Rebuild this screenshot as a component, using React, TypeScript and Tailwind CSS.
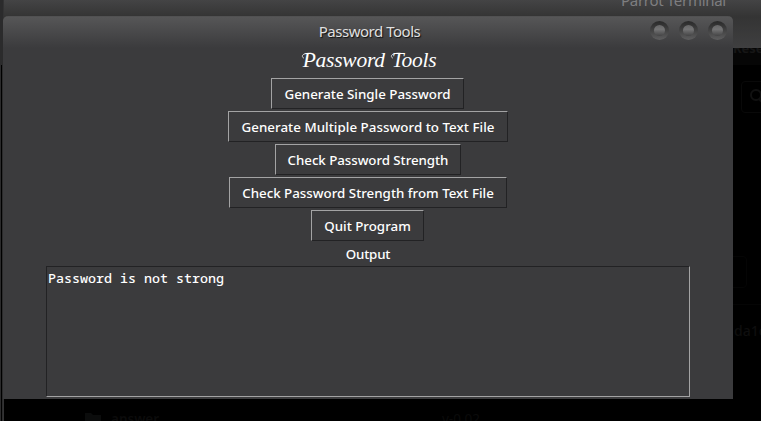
import React from "react";

const FONT = "font-['Noto_Sans','Open_Sans',sans-serif]";

function ToolButton({ label, className }: { label: string; className: string }) {
  return (
    <button
      className={`mb-[2px] flex h-[31px] items-center justify-center whitespace-nowrap border border-t-[#a3a3a4] border-l-[#a3a3a4] border-r-[#222224] border-b-[#222224] pt-[2px] text-[13.33px] font-medium text-white ${className}`}
    >
      {label}
    </button>
  );
}

function WindowControl() {
  return (
    <span className="flex size-[19px] items-center justify-center rounded-full bg-linear-to-b from-[#292929] to-[#5e5e5f]">
      <span className="size-[11px] rounded-full bg-linear-to-b from-[#666667] via-[#747475] via-40% to-[#444445]" />
    </span>
  );
}

function Backdrop() {
  return (
    <div className="absolute inset-0 overflow-hidden bg-black">
      <div className="h-12 bg-linear-to-b from-[#444445] via-[#343434] via-35% to-[#3f3f40]" />
      <div className="absolute top-[-10px] left-[621px] text-[15px] leading-5 tracking-[-0.3px] whitespace-nowrap text-[#7e7e80]">Parrot Terminal</div>
      <div className="absolute top-12 right-0 h-[17px] w-7 overflow-hidden bg-[#060606]">
        <span className="absolute top-[-9px] left-0 text-[13px] font-bold text-[#161616]">Rese</span>
      </div>
      <div className="absolute top-[81px] left-[741px] h-8 w-12 rounded border border-[#090909]" />
      <svg className="absolute top-[88px] left-[749px]" width="12" height="18" fill="none" stroke="#111111" strokeWidth="2"><circle cx="7" cy="7" r="5" /><path d="m10 11 4 4" /></svg>
      <div className="absolute top-[256px] left-[720px] h-8 w-[27px] rounded border border-[#050505]" />
      <div className="absolute top-[304px] left-[733px] h-px w-7 bg-[#050505]" />
      <div className="absolute top-[320px] left-[734px] text-[14px] font-medium text-[#0e0e0e]">da1c</div>
      <svg className="absolute top-[412px] left-[85px]" width="17" height="13" fill="#0b0c0c"><path d="M0 1h6l2 2h8v10H0z" /></svg>
      <div className="absolute top-[409px] left-[111px] text-[13.5px] font-semibold text-[#0b0b0b]">answer</div>
      <div className="absolute top-[409px] left-[442px] text-[13.5px] text-[#0b0b0b]">v-0.02</div>
      <div className="absolute top-0 left-0 h-[421px] w-1 border-r border-[#333334] bg-[#2b2b2c]" />
      <div className="absolute top-[65px] left-px h-[356px] w-px bg-black" />
    </div>
  );
}

// Swash strokes that lead into the heading's two capitals.
function CapitalSwash() {
  return (
    <svg className="absolute top-[4px] left-[-2px]" width="11" height="8" fill="none" stroke="white" strokeWidth="0.8" strokeLinecap="round">
      <path d="M2.5 6C.5 5 1 2.5 4 1.8 6 1.2 8 1.2 10 1.2" />
    </svg>
  );
}

export default function App() {
  return (
    <div className={`relative h-[421px] w-[761px] overflow-hidden ${FONT}`}>
      <Backdrop />
      <main className="absolute top-4 left-[3px] flex h-[383px] w-[730px] flex-col items-center overflow-hidden rounded-t-[5px] bg-[#3b3b3d] text-white">
        <header className="grid h-8 w-full shrink-0 grid-cols-[1fr_auto_1fr] items-center border-t border-[#515152] bg-linear-to-b from-[#565657] to-[#3b3b3d]">
          <span />
          <h1 className="pb-[2px] pl-[3px] text-[15px] leading-[29px] tracking-[-0.48px] text-[#e0e0e0] [text-shadow:1px_1px_1px_#111]">Password Tools</h1>
          <div className="flex justify-end gap-[10px] pr-[6px] pb-[4px]">
            <WindowControl />
            <WindowControl />
            <WindowControl />
          </div>
        </header>
        <h2 className="flex h-[30px] shrink-0 gap-[7px] pl-[3px] font-['Z003','URW_Chancery_L','Liberation_Serif',serif] text-[21.5px] leading-[25px] tracking-[-0.25px] whitespace-nowrap italic">
          <span className="relative"><CapitalSwash />Password</span>
          <span className="relative"><CapitalSwash />Tools</span>
        </h2>
        <ToolButton label="Generate Single Password" className="mr-px w-[193px]" />
        <ToolButton label="Generate Multiple Password to Text File" className="w-[280px] tracking-[0.04px]" />
        <ToolButton label="Check Password Strength" className="w-[186px] tracking-[-0.06px]" />
        <ToolButton label="Check Password Strength from Text File" className="w-[278px]" />
        <ToolButton label="Quit Program" className="mr-px w-[113px]" />
        <div className="h-[23px] shrink-0 text-[13.33px] leading-[22px] font-medium tracking-[-0.2px]">Output</div>
        <output className="h-[131px] w-[644px] shrink-0 border border-t-[#222224] border-r-[#a3a3a4] border-b-[#a3a3a4] border-l-[#222224] px-px pt-[2px] font-['Noto_Sans_Mono','DejaVu_Sans_Mono',monospace] text-[13.33px] leading-[18px] font-medium">Password is not strong</output>
      </main>
    </div>
  );
}
